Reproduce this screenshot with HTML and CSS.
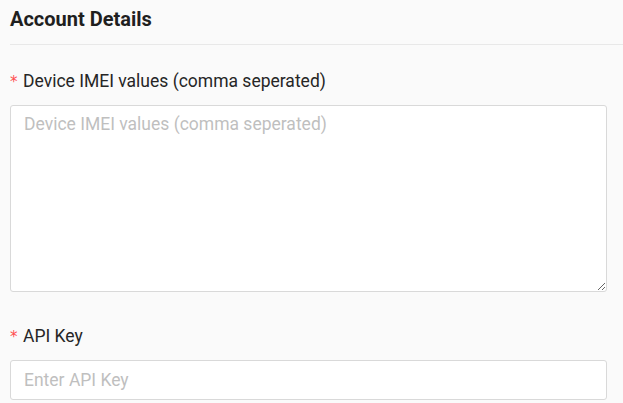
FILE: index.html
```html
<!DOCTYPE html>
<html>
<head>
<meta charset="utf-8">
<link rel="stylesheet" href="styles.css">
</head>
<body>
<div class="page">
  <div class="header">
    <h2 class="title">Account Details</h2>
  </div>
  <form class="form">
    <div class="item">
      <label class="label"><span class="req">*</span>Device IMEI values (comma seperated)</label>
      <textarea class="textarea" placeholder="Device IMEI values (comma seperated)"></textarea>
    </div>
    <div class="item">
      <label class="label"><span class="req">*</span>API Key</label>
      <input class="input" type="text" placeholder="Enter API Key">
    </div>
  </form>
</div>
</body>
</html>
```
FILE: styles.css
```css
html, body {
  margin: 0;
  padding: 0;
  background: #fafafa;
  font-family: Roboto, "Liberation Sans", Arial, sans-serif;
  color: rgba(0, 0, 0, 0.85);
  overflow: hidden;
}
.page {
  padding-left: 10px;
}
.header {
  border-bottom: 1px solid #e8e8e8;
  height: 45px;
  box-sizing: border-box;
}
.title {
  margin: 0;
  padding-top: 5px;
  font-size: 20px;
  line-height: 28px;
  font-weight: 700;
  color: #1f1f1f;
}
.form {
  padding-right: 16px;
  padding-top: 24px;
}
.item {
  display: flex;
  flex-direction: column;
  margin-bottom: 32px;
}
.label {
  font-size: 17.5px;
  line-height: 25px;
  height: 25px;
  margin-bottom: 11px;
  color: #262626;
  display: flex;
  align-items: center;
}
.req {
  display: inline-block;
  width: 13px;
  flex: none;
  color: #ff4d4f;
  font-size: 15px;
  font-family: SimSun, "DejaVu Sans", sans-serif;
  line-height: 1;
  position: relative;
  top: 1px;
}
.textarea, .input {
  font-family: Roboto, "Liberation Sans", Arial, sans-serif;
  font-size: 17.5px;
  color: #262626;
  background: #fff;
  border: 1px solid #d9d9d9;
  border-radius: 3px;
  box-sizing: border-box;
  margin: 0;
  outline: none;
}
.textarea {
  height: 187px;
  padding: 6px 13px;
  line-height: 24px;
  resize: vertical;
}
.input {
  height: 40px;
  padding: 7px 13px;
  line-height: 24px;
}
.textarea::placeholder, .input::placeholder {
  color: #bfbfbf;
}
```
